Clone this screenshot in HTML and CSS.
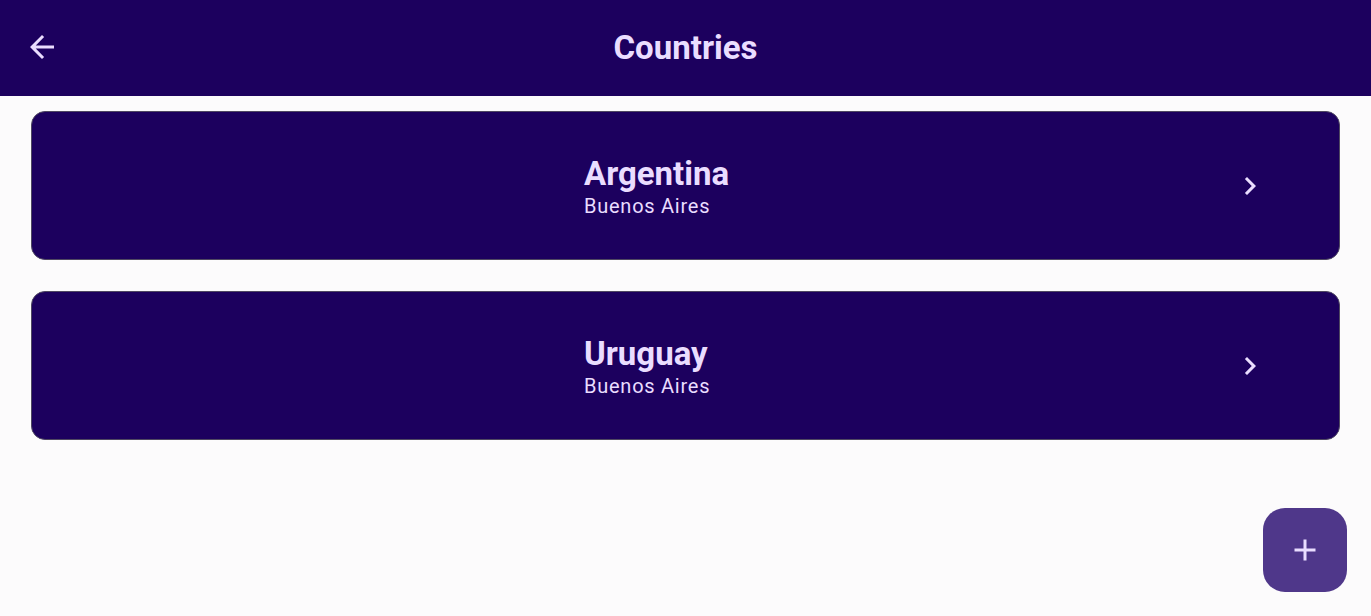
FILE: index.html
```html
<!DOCTYPE html>
<html lang="en">
<head>
<meta charset="utf-8">
<title>Countries</title>
<link rel="stylesheet" href="styles.css">
</head>
<body>
<div class="app">
  <header class="topbar">
    <button class="icon-btn back" aria-label="Back">
      <svg viewBox="0 0 24 24" width="36" height="36"><path fill="currentColor" d="M20 11H7.83l5.59-5.590L12 4l-8 8 8 8 1.41-1.41L7.830 13H20v-2z"/></svg>
    </button>
    <h1 class="title">Countries</h1>
  </header>
  <main class="list">
    <div class="card">
      <div class="card-text">
        <div class="card-title">Argentina</div>
        <div class="card-sub">Buenos Aires</div>
      </div>
      <svg class="chev" viewBox="0 0 24 24" width="36" height="36"><path fill="currentColor" d="M10 6L8.59 7.41 13.17 12l-4.58 4.59L10 18l6-6z"/></svg>
    </div>
    <div class="card">
      <div class="card-text">
        <div class="card-title">Uruguay</div>
        <div class="card-sub">Buenos Aires</div>
      </div>
      <svg class="chev" viewBox="0 0 24 24" width="36" height="36"><path fill="currentColor" d="M10 6L8.59 7.41 13.17 12l-4.58 4.59L10 18l6-6z"/></svg>
    </div>
  </main>
  <button class="fab" aria-label="Add">
    <svg viewBox="0 0 24 24" width="36" height="36"><path fill="currentColor" d="M19 13h-6v6h-2v-6H5v-2h6V5h2v6h6v2z"/></svg>
  </button>
</div>
</body>
</html>
```

FILE: styles.css
```css
* { box-sizing: border-box; }
html, body { margin: 0; padding: 0; }
body {
  background: #fcfbfc;
  font-family: Roboto, "Noto Sans", sans-serif;
  width: 1371px;
  height: 616px;
  overflow: hidden;
}
.app { position: relative; height: 616px; }
.topbar {
  height: 96px;
  background: #1c005e;
  color: #eaddff;
  display: flex;
  align-items: center;
  justify-content: center;
  position: relative;
}
.icon-btn {
  background: none;
  border: 0;
  padding: 0;
  color: #eaddff;
  display: flex;
}
.back {
  position: absolute;
  left: 24px;
  top: 29px;
}
.title {
  margin: 0;
  font-size: 33px;
  font-weight: 700;
  line-height: 40px;
}
.list {
  padding: 15px 31px 0 31px;
  display: flex;
  flex-direction: column;
  gap: 31px;
}
.card {
  height: 149px;
  background: #1c005e;
  border: 1px solid #4f4861;
  border-radius: 14px;
  display: flex;
  align-items: center;
  padding: 0 71px 0 552px;
  color: #eaddff;
}
.card-text { flex: 1; }
.card-title {
  font-size: 33px;
  font-weight: 700;
  line-height: 36px;
  margin-top: 2px;
}
.card-sub {
  font-size: 20px;
  line-height: 21px;
  margin-top: 4px;
  letter-spacing: 0.75px;
}
.chev { display: block; }
.fab {
  position: absolute;
  left: 1263px;
  top: 508px;
  width: 84px;
  height: 84px;
  border-radius: 22px;
  border: 0;
  background: #4f378a;
  color: #eaddff;
  display: flex;
  align-items: center;
  justify-content: center;
  padding: 0;
}
.fab svg { display: block; }
```
